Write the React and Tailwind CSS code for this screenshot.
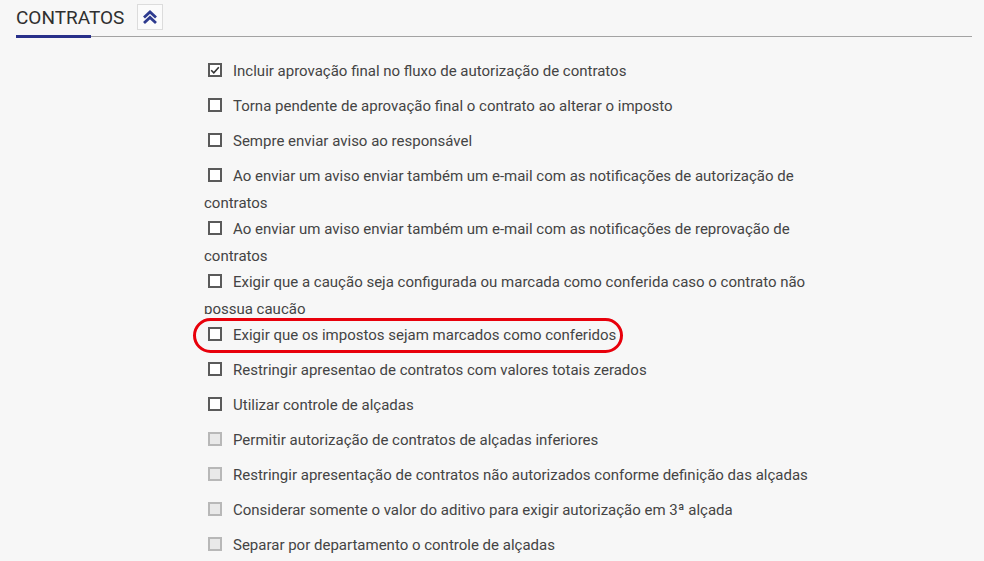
import React from "react";

const items = [
  { t: "Incluir aprovação final no fluxo de autorização de contratos", checked: true },
  { t: "Torna pendente de aprovação final o contrato ao alterar o imposto" },
  { t: "Sempre enviar aviso ao responsável" },
  { t: "Ao enviar um aviso enviar também um e-mail com as notificações de autorização de contratos" },
  { t: "Ao enviar um aviso enviar também um e-mail com as notificações de reprovação de contratos" },
  { t: "Exigir que a caução seja configurada ou marcada como conferida caso o contrato não possua caução" },
  { t: "Exigir que os impostos sejam marcados como conferidos", highlight: true },
  { t: "Restringir apresentao de contratos com valores totais zerados" },
  { t: "Utilizar controle de alçadas" },
  { t: "Permitir autorização de contratos de alçadas inferiores", disabled: true },
  { t: "Restringir apresentação de contratos não autorizados conforme definição das alçadas", disabled: true },
  { t: "Considerar somente o valor do aditivo para exigir autorização em 3ª alçada", disabled: true },
  { t: "Separar por departamento o controle de alçadas", disabled: true },
];

function Box({ checked, disabled }) {
  return (
    <span
      className={
        "inline-flex items-center justify-center align-middle w-[14px] h-[14px] ml-[4px] mr-[11px] relative top-[-2px] border-2 " +
        (disabled ? "border-[#b8b8b8] bg-[#e9e9e9]" : "border-[#5a5a5a] bg-white")
      }
    >
      {checked && (
        <svg width="10" height="10" viewBox="0 0 10 10">
          <path d="M1.2 5.2 L3.8 7.8 L8.8 2.2" fill="none" stroke="#333" strokeWidth="1.6" />
        </svg>
      )}
    </span>
  );
}

export default function App() {
  return (
    <div className="min-h-[561px] bg-[#f7f7f7] font-['Roboto',sans-serif] overflow-hidden">
      <div className="pl-4 pr-3 pt-[4px]">
        <div className="flex items-center h-[26px]">
          <span className="text-[19px] text-[#2f2f2f] leading-none">CONTRATOS</span>
          <span className="ml-[13px] w-[26px] h-[26px] border border-[#dcdcdc] bg-[#fbfbfb] flex items-center justify-center">
            <svg width="18" height="18" viewBox="0 0 18 18">
              <path d="M3 9.5 L9 4 L15 9.5" fill="none" stroke="#2e3b8f" strokeWidth="2.8" strokeLinejoin="miter" />
              <path d="M3 15 L9 9.5 L15 15" fill="none" stroke="#2e3b8f" strokeWidth="2.8" strokeLinejoin="miter" />
            </svg>
          </span>
        </div>
        <div className="flex items-center mt-[4px] h-[4px]">
          <div className="w-[75px] h-[3px] bg-[#28308a]" />
          <div className="flex-1 h-px bg-[#a3a3a3]" />
        </div>
      </div>
      <div className="ml-[204px] w-[620px] mt-[20px] text-[15px] text-[#444] leading-[26.5px]">
        {items.map((it, i) => (
          <div
            key={i}
            className={
              it.highlight
                ? "relative z-10 bg-[#f7f7f7] -mt-[8px] pt-[8px] min-h-[43px]"
                : "min-h-[35px]"
            }
          >
            {it.highlight && (
              <span className="absolute left-[-11px] top-[4px] w-[430px] h-[35px] rounded-full border-[3px] border-[#e8000b] pointer-events-none" />
            )}
            <Box checked={it.checked} disabled={it.disabled} />
            {it.t}
          </div>
        ))}
      </div>
    </div>
  );
}
